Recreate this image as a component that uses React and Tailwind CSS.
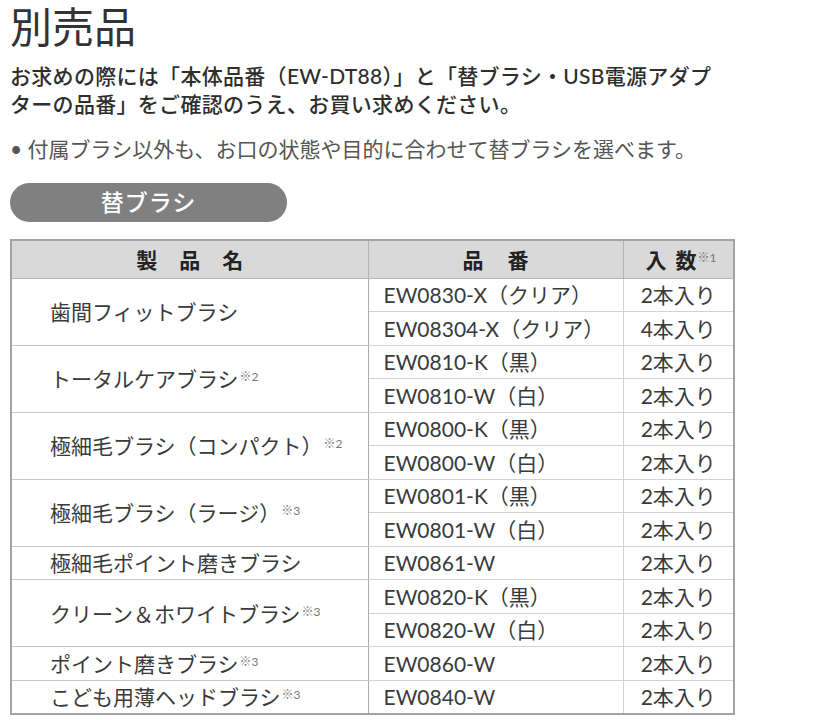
const rows = [
  { name: '歯間フィットブラシ', items: [['EW0830-X（クリア）', '2本入り'], ['EW08304-X（クリア）', '4本入り']] },
  { name: 'トータルケアブラシ', note: '※2', items: [['EW0810-K（黒）', '2本入り'], ['EW0810-W（白）', '2本入り']] },
  { name: '極細毛ブラシ（コンパクト）', note: '※2', items: [['EW0800-K（黒）', '2本入り'], ['EW0800-W（白）', '2本入り']] },
  { name: '極細毛ブラシ（ラージ）', note: '※3', items: [['EW0801-K（黒）', '2本入り'], ['EW0801-W（白）', '2本入り']] },
  { name: '極細毛ポイント磨きブラシ', items: [['EW0861-W', '2本入り']] },
  { name: 'クリーン＆ホワイトブラシ', note: '※3', items: [['EW0820-K（黒）', '2本入り'], ['EW0820-W（白）', '2本入り']] },
  { name: 'ポイント磨きブラシ', note: '※3', items: [['EW0860-W', '2本入り']] },
  { name: 'こども用薄ヘッドブラシ', note: '※3', items: [['EW0840-W', '2本入り']] },
];

const font = 'font-["Lato","Noto_Sans_CJK_JP",sans-serif]';

// preflight already lifts <sup> by half an em
const Note = ({ children }) => (
  <sup className="ml-[1px] text-[12px] text-[#777] font-normal">{children}</sup>
);

export default function App() {
  return (
    <div className={`w-[820px] h-[720px] overflow-hidden bg-white px-[10px] text-[#333] ${font}`}>
      <h1 className='mt-[1px] text-[42px] leading-[48px] font-["Noto_Sans_CJK_JP",sans-serif]'>別売品</h1>

      <p className="mt-[13px] text-[21px] leading-[28px] font-medium tracking-[0.3px] text-[#2e2e2e]">
        お求めの際には「本体品番（EW-DT88）」と「替ブラシ・USB電源アダプ
        <br />
        ターの品番」をご確認のうえ、お買い求めください。
      </p>
      <p className="mt-[17px] text-[21px] leading-[28px] text-[#555]">• 付属ブラシ以外も、お口の状態や目的に合わせて替ブラシを選べます。</p>

      <div className="mt-[20px] flex h-[39px] w-[277px] items-center justify-center rounded-full bg-[#808080]">
        <span className="text-[23px] font-medium text-white tracking-[1px]">替ブラシ</span>
      </div>

      <table className="mt-[17px] w-[723px] table-fixed border-collapse border-2 border-[#a3a3a3] text-[21px] text-[#3a3a3a]">
        <colgroup>
          <col className="w-[357px]" />
          <col className="w-[255px]" />
          <col className="w-[111px]" />
        </colgroup>
        <thead>
          <tr className="h-[38px] bg-[#d9d9d9] text-[#222]">
            <th className="border border-[#b5b5b5] font-bold tracking-[22px] pl-[22px]">製品名</th>
            <th className="border border-[#b5b5b5] font-bold tracking-[24px] pl-[24px]">品番</th>
            <th className="border border-[#b5b5b5] font-bold text-left pl-[22px]">
              <span className="tracking-[9px]">入</span>
              <span>数</span>
              <Note>※1</Note>
            </th>
          </tr>
        </thead>
        <tbody>
          {rows.map((r) =>
            r.items.map((it, i) => (
              <tr key={it[0]} className="h-[33.5px]">
                {i === 0 && (
                  <td rowSpan={r.items.length} className="border border-[#c6c6c6] border-r-[#ababab] pl-[38px] leading-none">
                    {r.name}
                    {r.note && <Note>{r.note}</Note>}
                  </td>
                )}
                <td className="border border-[#d2d2d2] pl-[15px] leading-none">{it[0]}</td>
                <td className="border border-[#d2d2d2] border-l-[#ababab] text-center leading-none">{it[1]}</td>
              </tr>
            ))
          )}
        </tbody>
      </table>
    </div>
  );
}
